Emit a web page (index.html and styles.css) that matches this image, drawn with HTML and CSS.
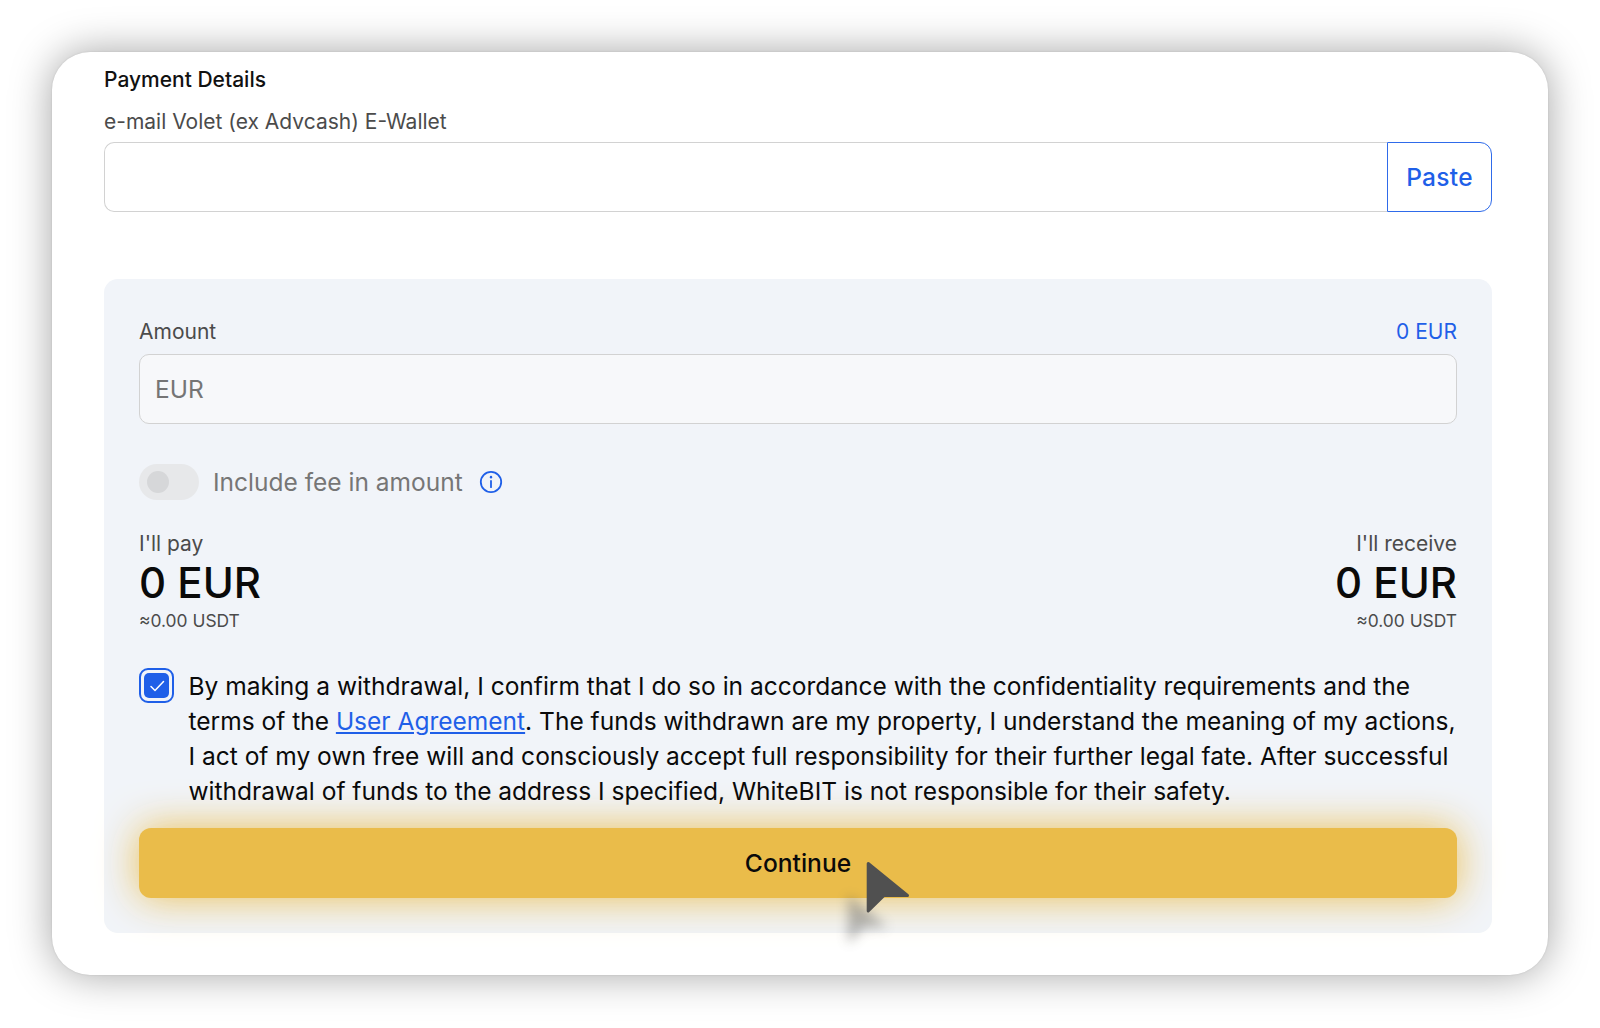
FILE: index.html
```html
<!DOCTYPE html>
<html lang="en">
<head>
<meta charset="utf-8">
<title>Payment Details</title>
<link rel="stylesheet" href="styles.css">
</head>
<body>
<main class="card">
  <h2 class="title">Payment Details</h2>
  <div class="label wallet-label">e-mail Volet (ex Advcash) E-Wallet</div>
  <div class="wallet-field">
    <div class="wallet-input"></div>
    <div class="paste">Paste</div>
  </div>
  <section class="panel">
    <div class="amount-head">
      <span class="label">Amount</span>
      <span class="amount-max">0 EUR</span>
    </div>
    <div class="amount-input">EUR</div>
    <div class="fee-row">
      <span class="toggle"><span class="knob"></span></span>
      <span class="fee-text">Include fee in amount</span>
      <svg class="info" width="24" height="24" viewBox="0 0 24 24" fill="none" stroke="#1f5fe8" stroke-width="1.8" stroke-linecap="round"><circle cx="12" cy="12" r="10.2"/><path d="M12 11v6.2"/><path d="M12 7v.3" stroke-width="2.4"/></svg>
    </div>
    <div class="totals">
      <div class="total">
        <div class="total-label">I'll pay</div>
        <div class="total-value">0 EUR</div>
        <div class="total-sub">≈0.00 USDT</div>
      </div>
      <div class="total total-right">
        <div class="total-label">I'll receive</div>
        <div class="total-value">0 EUR</div>
        <div class="total-sub">≈0.00 USDT</div>
      </div>
    </div>
    <div class="agree">
      <span class="check">
        <span class="check-box">
          <svg width="18" height="14" viewBox="0 0 18 14" fill="none" stroke="#fff" stroke-width="1.5" stroke-linecap="round" stroke-linejoin="round"><path d="M3 7.500l4 4 8.500-9"/></svg>
        </span>
      </span>
      <p class="agree-text">By making a withdrawal, I confirm that I do so in accordance with the confidentiality requirements and the terms of the <a class="link" href="#">User Agreement</a>. The funds withdrawn are my property, I understand the meaning of my actions, I act of my own free will and consciously accept full responsibility for their further legal fate. After successful withdrawal of funds to the address I specified, WhiteBIT is not responsible for their safety.</p>
    </div>
    <div class="continue">Continue</div>
  </section>
  <svg class="cursor-shadow" width="46" height="56" viewBox="0 0 44 52"><path d="M3 3l38 31H18L3 50z" fill="#555"/></svg>
  <svg class="cursor" width="46" height="54" viewBox="0 0 46 54"><path d="M3.200 3.500L42.500 35.500H19L3.200 51z" fill="#505050" stroke="#505050" stroke-width="3" stroke-linejoin="round"/></svg>
</main>
</body>
</html>
```
FILE: styles.css
```css
* { box-sizing: border-box; }
html, body { margin: 0; height: 100%; }
body {
  width: 1600px;
  height: 1028px;
  padding: 52px;
  background: #fff;
  font-family: Inter, "Noto Sans", sans-serif;
  overflow: hidden;
}
.card {
  position: relative;
  width: 1496px;
  height: 923px;
  padding: 13px 56px 0 52px;
  background: #fff;
  border-radius: 38px;
  box-shadow: 0 0 2px rgba(0,0,0,.12), 0 0 42px rgba(0,0,0,.36);
}
.title {
  margin: 0;
  font-size: 21px;
  line-height: 30px;
  font-weight: 500;
  color: #111;
}
.label {
  font-size: 21px;
  line-height: 30px;
  color: #4b4b4b;
}
.wallet-label { margin-top: 12px; }
.wallet-field {
  display: flex;
  height: 70px;
  margin-top: 5px;
}
.wallet-input {
  flex: 1;
  border: 1.5px solid #d2d2d2;
  border-right: 0;
  border-radius: 10px 0 0 10px;
}
.paste {
  width: 105px;
  display: flex;
  align-items: center;
  justify-content: center;
  border: 1.5px solid #2f6bea;
  border-radius: 0 12px 12px 0;
  color: #1f5fe8;
  font-size: 24.5px;
  font-weight: 450;
  letter-spacing: .3px;
}
.panel {
  height: 654px;
  margin-top: 67px;
  padding: 38px 35px 0;
  background: #f1f4f9;
  border-radius: 14px;
}
.amount-head {
  display: flex;
  justify-content: space-between;
  line-height: 30px;
}
.amount-max { color: #1f5fe8; font-size: 21px; }
.amount-input {
  height: 70px;
  margin-top: 7px;
  padding-left: 15px;
  display: flex;
  align-items: center;
  background: #f7f8fa;
  border: 1.5px solid #d2d2d2;
  border-radius: 10px;
  font-size: 24.5px;
  color: #757575;
}
.fee-row {
  display: flex;
  align-items: center;
  height: 36px;
  margin-top: 40px;
}
.toggle {
  width: 60px;
  height: 36px;
  padding: 7px 8px;
  border-radius: 18px;
  background: #e7e8ea;
}
.knob {
  display: block;
  width: 22px;
  height: 22px;
  border-radius: 50%;
  background: #d6d7d9;
}
.fee-text {
  margin-left: 14px;
  font-size: 24.5px;
  color: #767676;
}
.info { margin-left: 16px; }
.totals {
  display: flex;
  justify-content: space-between;
  margin-top: 29px;
}
.total-right { text-align: right; }
.total-label { font-size: 21px; line-height: 30px; color: #4b4b4b; }
.total-value { font-size: 42px; line-height: 47px; font-weight: 500; color: #0a0a0a; }
.total-sub { font-size: 17.4px; line-height: 29px; color: #4b4b4b; }
.agree {
  display: flex;
  margin-top: 32px;
}
.check {
  flex: none;
  width: 35px;
  height: 35px;
  margin-top: 1px;
  padding: 3px;
  border: 2px solid #1f5fe8;
  border-radius: 9px;
}
.check-box {
  display: flex;
  align-items: center;
  justify-content: center;
  width: 100%;
  height: 100%;
  background: #1f5fe8;
  border-radius: 5px;
}
.agree-text {
  margin: 2px 0 0 14.5px;
  font-size: 24.53px;
  line-height: 35px;
  color: #0a0a0a;
}
.link { color: #1f5fe8; }
.continue {
  height: 70px;
  margin-top: 19px;
  padding-bottom: 1px;
  display: flex;
  align-items: center;
  justify-content: center;
  background: #eabc4a;
  border-radius: 12px;
  box-shadow: 0 0 40px rgba(234,188,74,.95);
  font-size: 24.6px;
  font-weight: 500;
  color: #0a0a0a;
}
.cursor, .cursor-shadow { position: absolute; }
.cursor { left: 813px; top: 808px; }
.cursor-shadow { left: 793px; top: 839px; opacity: .4; filter: blur(6px); }
```
